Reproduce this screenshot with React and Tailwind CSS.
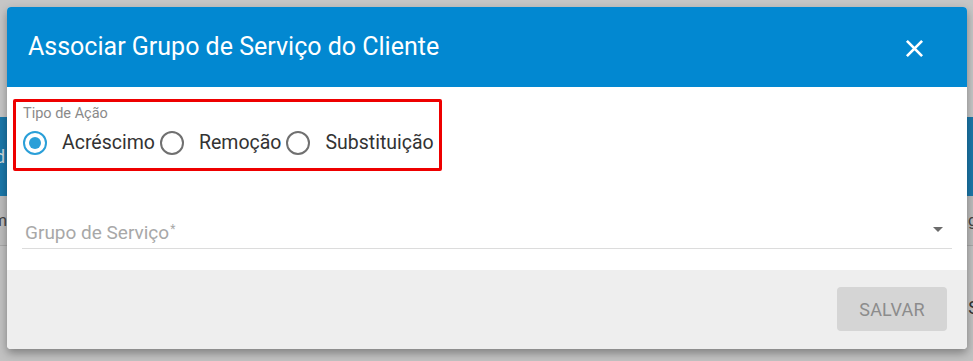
import React from 'react';

const Radio = ({ label, checked = false }) => (
  <label className="flex items-center">
    <span
      className={`w-[24px] h-[24px] rounded-full border-2 flex items-center justify-center ${
        checked ? 'border-[#2a9fd8]' : 'border-[#707070]'
      }`}
    >
      {checked && <span className="w-[12px] h-[12px] rounded-full bg-[#2a9fd8]"></span>}
    </span>
    <span className="ml-[15px] text-[19.5px] text-[#333333] leading-none">{label}</span>
  </label>
);

export default function App() {
  return (
    <div
      className="relative w-[973px] h-[361px] overflow-hidden bg-[#c6c6c6]"
      style={{ fontFamily: 'Roboto, "Liberation Sans", sans-serif' }}
    >
      {/* page behind the overlay */}
      <div className="pt-[117px]">
        <div className="h-[79px] bg-[#1b78aa] flex items-center text-[18px] text-[#cfd8dc]">
          <span className="-ml-[5px]">d</span>
        </div>
        <div className="h-[50px] bg-[#bdbdbd] border-b border-[#a8a8a8] flex items-center justify-between text-[16px] text-[#444]">
          <span className="-ml-[7px]">m</span>
          <span className="-mr-[4px]">g</span>
        </div>
        <div className="h-[115px] bg-[#c2c2c2] flex items-center justify-end text-[18px] text-[#333]">
          <span className="-mr-[6px] mt-[8px]">S</span>
        </div>
      </div>

      {/* dialog */}
      <div className="absolute left-[7px] top-[7px] w-[960px] h-[342px] rounded-[4px] overflow-hidden bg-white shadow-[0_4px_10px_rgba(0,0,0,0.35)] flex flex-col">
        <div className="h-[80px] bg-[#0288d1] flex items-center justify-between pl-[21px] pr-[43px]">
          <h1 className="text-[25px] text-white font-normal">
            Associar Grupo de Serviço do Cliente
          </h1>
          <svg width="19" height="19" viewBox="0 0 20 20" className="mt-[2px]">
            <path d="M2 2 L18 18 M18 2 L2 18" stroke="white" strokeWidth="2.8" strokeLinecap="butt" />
          </svg>
        </div>

        <div className="flex-1 px-[6px] pt-[12px]">
          <div className="w-[429px] h-[72px] border-[3px] border-[#ee0000] rounded-[2px] pl-[7px] pt-[3px]">
            <div className="text-[14.5px] text-[#8a8a8a] leading-[18px]">Tipo de Ação</div>
            <div className="flex items-center mt-[8px] gap-[5px]">
              <Radio label="Acréscimo" checked />
              <Radio label="Remoção" />
              <Radio label="Substituição" />
            </div>
          </div>

          <div className="mx-[9px] mt-[36px] h-[42px] border-b border-[#dcdcdc] flex items-end justify-between pb-[6px] pl-[3px] pr-[9px]">
            <span className="text-[19px] text-[#a8a8a8] leading-none">
              Grupo de Serviço<sup className="text-[12px] ml-[1px]">*</sup>
            </span>
            <svg width="10" height="5" viewBox="0 0 10 5" className="mb-[10px]">
              <path d="M0 0 L10 0 L5 5 Z" fill="#6b6b6b" />
            </svg>
          </div>
        </div>

        <div className="h-[79px] bg-[#eeeeee] flex items-center justify-end pr-[20px] pb-[1px]">
          <button className="w-[110px] h-[44px] rounded-[4px] bg-[#d5d5d5] text-[18px] text-[#8c8c8c] tracking-[0.2px]">
            SALVAR
          </button>
        </div>
      </div>
    </div>
  );
}
